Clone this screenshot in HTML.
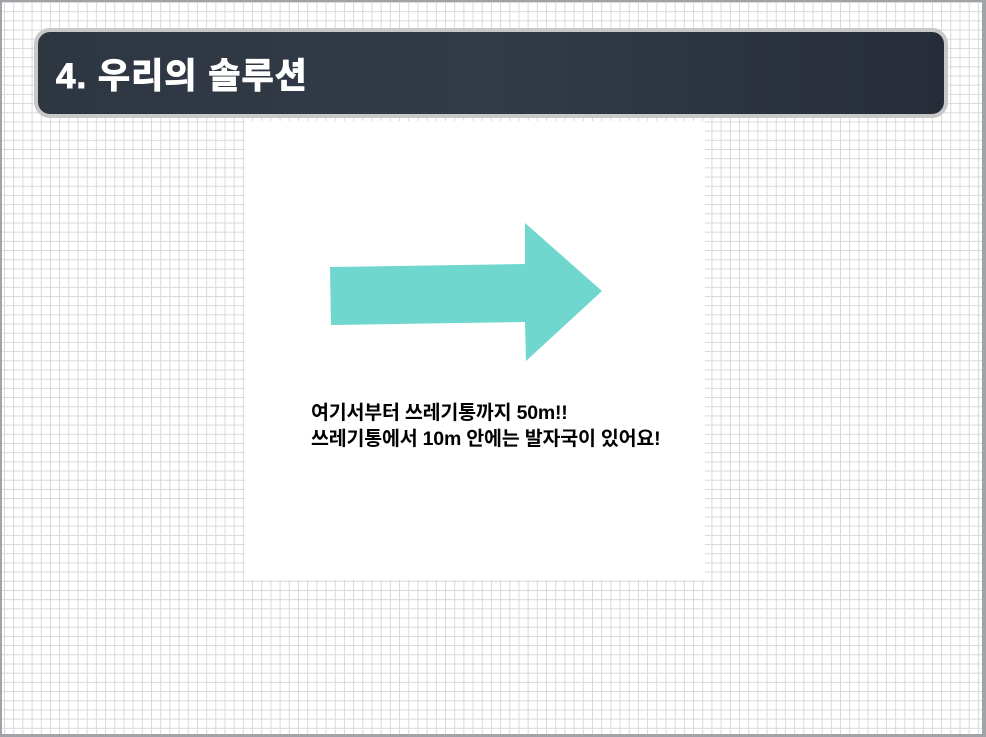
<!DOCTYPE html><html><head><meta charset="utf-8"><style>
body{margin:0;width:986px;height:737px;overflow:hidden;position:relative;background:#fff;
background-image:linear-gradient(#d8d8d8 1px,transparent 1px),linear-gradient(90deg,#d8d8d8 1px,transparent 1px);background-size:9.2px 9.2px;background-position:4px 2px}
.frame{position:absolute;left:0;top:0;width:980px;height:732px;border:2px solid #a0a4a8;border-right-width:4px;border-bottom-width:3px}
.bar{position:absolute;left:34px;top:28px;width:906px;height:82px;border:4px solid #c8c8c8;border-radius:16px;background:linear-gradient(90deg,#2e3642,#323b47 50%,#262d38);}
.bar span{position:absolute;left:18px;top:16px;color:#fff;font:bold 35px "Liberation Sans","Noto Sans CJK KR",sans-serif;letter-spacing:1px;-webkit-text-stroke:1px #fff}
.panel{position:absolute;left:245px;top:121px;width:460px;height:459px;background:#fff}
.txt{position:absolute;left:311px;top:400px;font:bold 19.5px/26px "Liberation Sans","Noto Sans CJK KR",sans-serif;color:#000;letter-spacing:-0.2px}
</style></head><body>
<div class="frame"></div>
<div class="panel"></div>
<div class="bar"><span>4. 우리의 솔루션</span></div>
<svg style="position:absolute;left:0;top:0" width="986" height="737"><polygon points="330,267 525,264 525,223 602,291 526,361 525,322 331,325" fill="#6fd7cd"/></svg>
<div class="txt">여기서부터 쓰레기통까지 50m!!<br>쓰레기통에서 10m 안에는 발자국이 있어요!</div>
</body></html>
